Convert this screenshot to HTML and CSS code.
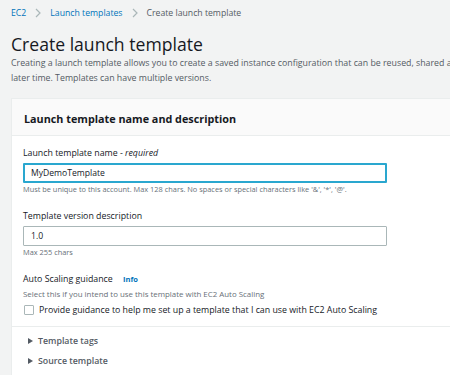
FILE: index.html
```html
<!DOCTYPE html>
<html lang="en">

<head>
    <meta charset="UTF-8">
    <meta name="viewport" content="width=device-width, initial-scale=1.0">
    <title>Create launch template</title>
    <link rel="stylesheet" href="styles.css">
</head>

<body>
    <nav class="crumbs">
        <a href="#">EC2</a>
        <svg class="sep" width="6" height="10" viewBox="0 0 6 10"><polyline points="1,1 5,5 1,9" fill="none" stroke="#aab7b8" stroke-width="1.2"/></svg>
        <a href="#">Launch templates</a>
        <svg class="sep" width="6" height="10" viewBox="0 0 6 10"><polyline points="1,1 5,5 1,9" fill="none" stroke="#aab7b8" stroke-width="1.2"/></svg>
        <span class="current">Create launch template</span>
    </nav>

    <h1>Create launch template</h1>
    <p class="intro">Creating a launch template allows you to create a saved instance configuration that can be reused, shared and launched at a later time. Templates can have multiple versions.</p>

    <div class="card">
        <div class="cardHead">
            <h2>Launch template name and description</h2>
        </div>
        <div class="cardBody">
            <div class="field">
                <label class="label">Launch template name - <i>required</i></label>
                <input type="text" class="input focus" value="MyDemoTemplate">
                <p class="hint">Must be unique to this account. Max 128 chars. No spaces or special characters like '&amp;', '*', '@'.</p>
            </div>

            <div class="field">
                <label class="label">Template version description</label>
                <input type="text" class="input" value="1.0">
                <p class="hint">Max 255 chars</p>
            </div>

            <div class="field">
                <label class="label">Auto Scaling guidance <a href="#" class="info">Info</a></label>
                <p class="hint desc">Select this if you intend to use this template with EC2 Auto Scaling</p>
                <label class="check"><span class="box"></span>Provide guidance to help me set up a template that I can use with EC2 Auto Scaling</label>
            </div>
        </div>
        <div class="expanders">
            <div class="exp"><span class="tri"></span>Template tags</div>
            <div class="exp"><span class="tri"></span>Source template</div>
        </div>
    </div>
</body>

</html>
```

FILE: styles.css
```css
body {
    font-family: "Open Sans", Arial, sans-serif;
    background-color: #f2f3f3;
    color: #16191f;
    margin: 0;
    padding: 0 0 0 11px;
    overflow: hidden;
    width: 700px;
}

a {
    color: #0073bb;
    text-decoration: none;
}

.crumbs {
    font-size: 8.7px;
    height: 26px;
    display: flex;
    align-items: center;
    color: #545b64;
}

.sep {
    margin: 0 9px 0 9px;
}

h1 {
    font-size: 17.6px;
    font-weight: 400;
    margin: 7px 0 0 0;
    line-height: 22px;
}

.intro {
    font-size: 8.8px;
    line-height: 15px;
    color: #545b64;
    margin: 1px 0 0 0;
    width: 510px;
}

.card {
    margin-top: 12px;
    background-color: white;
    border-left: 1px solid #eaeded;
    border-top: 1px solid #eaeded;
    width: 640px;
}

.cardHead {
    background-color: #fafafa;
    border-bottom: 1px solid #eaeded;
    height: 36px;
    display: flex;
    align-items: center;
    padding-left: 12px;
}

h2 {
    font-size: 10.8px;
    font-weight: 700;
    margin: 2px 0 0 0;
}

.cardBody {
    padding: 10px 11px 9px 11px;
    border-bottom: 1px solid #eaeded;
}

.field {
    margin-bottom: 14px;
}

.field:last-child {
    margin-bottom: 0;
}

.label {
    display: block;
    font-size: 8.8px;
    line-height: 14px;
    margin-bottom: 3px;
}

.info {
    font-size: 7.5px;
    font-weight: 700;
    margin-left: 8px;
}

.input {
    display: block;
    box-sizing: border-box;
    width: 364px;
    height: 20px;
    margin: 0;
    border: 1px solid #aab7b8;
    border-radius: 1px;
    font-family: inherit;
    font-size: 8.6px;
    color: #16191f;
    padding: 0 7px;
    outline: none;
}

.input.focus {
    border: 2px solid #2aa7cf;
    padding: 0 6px;
}

.hint {
    font-size: 7.4px;
    line-height: 11px;
    color: #687078;
    margin: 1px 0 0 0;
}

.hint.desc {
    font-size: 7.9px;
    margin: 0;
}

.check {
    display: flex;
    align-items: center;
    font-size: 8.8px;
    line-height: 14px;
    margin-top: 3px;
}

.box {
    width: 8px;
    height: 8px;
    border: 1px solid #aab7b8;
    border-radius: 1px;
    margin: 0 5px 0 1px;
}

.expanders {
    padding: 4px 16px 4px 16px;
}

.exp {
    display: flex;
    align-items: center;
    font-size: 8.8px;
    font-weight: 600;
    color: #545b64;
    height: 20px;
}

.tri {
    width: 0;
    height: 0;
    border-top: 3px solid transparent;
    border-bottom: 3px solid transparent;
    border-left: 5px solid #545b64;
    margin-right: 5px;
}
```
